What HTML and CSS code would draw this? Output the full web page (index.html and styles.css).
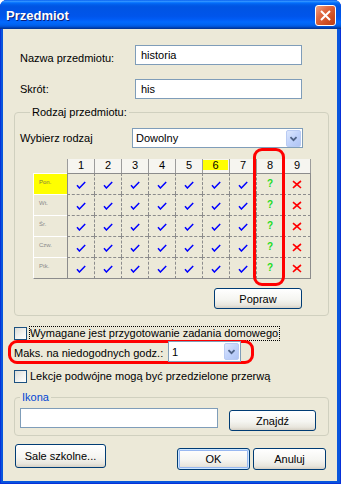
FILE: index.html
```html
<!DOCTYPE html>
<html lang="pl">
<head>
  <meta charset="UTF-8" />
  <title>Przedmiot</title>
  <link rel="stylesheet" href="styles.css">
</head>
<body>
  <svg class="defs" width="0" height="0">
    <symbol id="chk" viewBox="0 0 10 8"><path d="M1 4.2 L3.4 7 L9.2 1" fill="none" stroke="#0000ff" stroke-width="1.5"/></symbol>
    <symbol id="no" viewBox="0 0 10 9"><path d="M1 1.2 Q5 4.5 9 8 M9 1 Q4.5 4.5 1 8" fill="none" stroke="#ff0000" stroke-width="1.6"/></symbol>
    <symbol id="down" viewBox="0 0 15 17"><path d="M4 7 L7.5 10.5 L11 7" fill="none" stroke="#4d6185" stroke-width="2"/></symbol>
  </svg>

  <div class="window">
    <div class="titlebar">
      <span class="title">Przedmiot</span>
      <span class="close">
        <svg width="19" height="19" viewBox="0 0 19 19"><path d="M5 5 L14 14 M14 5 L5 14" stroke="#fff" stroke-width="2"/></svg>
      </span>
    </div>

    <div class="client">
      <div class="row first">
        <label class="lbl low">Nazwa przedmiotu:</label>
        <input class="textbox" type="text" value="historia">
      </div>
      <div class="row second">
        <label class="lbl">Skrót:</label>
        <input class="textbox" type="text" value="his">
      </div>

      <fieldset class="group">
        <legend>Rodzaj przedmiotu:</legend>
        <div class="row kind">
          <label class="lbl">Wybierz rodzaj</label>
          <div class="combo wide"><span>Dowolny</span><svg class="combo-btn"><use href="#down"/></svg></div>
        </div>

        <div class="plan">
          <div class="plan-head">
            <span class="corner"></span><span>1</span><span>2</span><span>3</span><span>4</span><span>5</span><span class="today"><i>6</i></span><span>7</span><span>8</span><span>9</span>
          </div>
          <div class="plan-row">
            <span class="day today">Pon.</span>
            <span class="c"><svg class="ok"><use href="#chk"/></svg></span><span class="c"><svg class="ok"><use href="#chk"/></svg></span><span class="c"><svg class="ok"><use href="#chk"/></svg></span><span class="c"><svg class="ok"><use href="#chk"/></svg></span><span class="c"><svg class="ok"><use href="#chk"/></svg></span><span class="c"><svg class="ok"><use href="#chk"/></svg></span><span class="c"><svg class="ok"><use href="#chk"/></svg></span><span class="c"><b class="maybe">?</b></span><span class="c"><svg class="no"><use href="#no"/></svg></span>
          </div>
          <div class="plan-row">
            <span class="day">Wt.</span>
            <span class="c"><svg class="ok"><use href="#chk"/></svg></span><span class="c"><svg class="ok"><use href="#chk"/></svg></span><span class="c"><svg class="ok"><use href="#chk"/></svg></span><span class="c"><svg class="ok"><use href="#chk"/></svg></span><span class="c"><svg class="ok"><use href="#chk"/></svg></span><span class="c"><svg class="ok"><use href="#chk"/></svg></span><span class="c"><svg class="ok"><use href="#chk"/></svg></span><span class="c"><b class="maybe">?</b></span><span class="c"><svg class="no"><use href="#no"/></svg></span>
          </div>
          <div class="plan-row">
            <span class="day">Śr.</span>
            <span class="c"><svg class="ok"><use href="#chk"/></svg></span><span class="c"><svg class="ok"><use href="#chk"/></svg></span><span class="c"><svg class="ok"><use href="#chk"/></svg></span><span class="c"><svg class="ok"><use href="#chk"/></svg></span><span class="c"><svg class="ok"><use href="#chk"/></svg></span><span class="c"><svg class="ok"><use href="#chk"/></svg></span><span class="c"><svg class="ok"><use href="#chk"/></svg></span><span class="c"><b class="maybe">?</b></span><span class="c"><svg class="no"><use href="#no"/></svg></span>
          </div>
          <div class="plan-row">
            <span class="day">Czw.</span>
            <span class="c"><svg class="ok"><use href="#chk"/></svg></span><span class="c"><svg class="ok"><use href="#chk"/></svg></span><span class="c"><svg class="ok"><use href="#chk"/></svg></span><span class="c"><svg class="ok"><use href="#chk"/></svg></span><span class="c"><svg class="ok"><use href="#chk"/></svg></span><span class="c"><svg class="ok"><use href="#chk"/></svg></span><span class="c"><svg class="ok"><use href="#chk"/></svg></span><span class="c"><b class="maybe">?</b></span><span class="c"><svg class="no"><use href="#no"/></svg></span>
          </div>
          <div class="plan-row">
            <span class="day">Ptk.</span>
            <span class="c"><svg class="ok"><use href="#chk"/></svg></span><span class="c"><svg class="ok"><use href="#chk"/></svg></span><span class="c"><svg class="ok"><use href="#chk"/></svg></span><span class="c"><svg class="ok"><use href="#chk"/></svg></span><span class="c"><svg class="ok"><use href="#chk"/></svg></span><span class="c"><svg class="ok"><use href="#chk"/></svg></span><span class="c"><svg class="ok"><use href="#chk"/></svg></span><span class="c"><b class="maybe">?</b></span><span class="c"><svg class="no"><use href="#no"/></svg></span>
          </div>
          <span class="mark col-mark"></span>
        </div>

        <div class="group-actions">
          <button class="btn popraw">Popraw</button>
        </div>
      </fieldset>

      <div class="check-row homework">
        <span class="box"></span>
        <span class="check-text focus">Wymagane jest przygotowanie zadania domowego</span>
      </div>

      <div class="maks">
        <label class="lbl maks-lbl">Maks. na niedogodnych godz.:</label>
        <div class="combo small"><span>1</span><svg class="combo-btn"><use href="#down"/></svg></div>
        <span class="mark maks-mark"></span>
      </div>

      <div class="check-row split">
        <span class="box"></span>
        <span class="check-text">Lekcje podwójne mogą być przedzielone przerwą</span>
      </div>

      <fieldset class="group icon-group">
        <legend>Ikona</legend>
        <div class="icon-row">
          <input class="textbox icon-path" type="text" value="">
          <button class="btn find">Znajdź</button>
        </div>
      </fieldset>

      <div class="footer">
        <button class="btn rooms">Sale szkolne...</button>
        <button class="btn ok-btn">OK</button>
        <button class="btn cancel">Anuluj</button>
      </div>
    </div>
  </div>
</body>
</html>
```

FILE: styles.css
```css
* {
  box-sizing: border-box;
}

html, body {
  margin: 0;
}

body {
  width: 341px;
  height: 484px;
  overflow: hidden;
  background: #fff;
  font-family: "Liberation Sans", Arial, sans-serif;
  font-size: 11px;
  color: #000;
}

.defs {
  position: absolute;
}

.window {
  width: 341px;
  height: 484px;
  display: flex;
  flex-direction: column;
  background: #0855dd;
  border-radius: 7px 7px 0 0;
  box-shadow: inset 1px 0 #0831d9, inset -1px 0 #0831d9, inset 0 -1px #0831d9;
}

/* title bar */
.titlebar {
  height: 29px;
  flex: none;
  display: flex;
  align-items: flex-start;
  border-radius: 7px 7px 0 0;
  background: linear-gradient(to bottom, #0058ee 0%, #3593ff 4%, #288eff 6%, #127dff 8%, #036ffc 10%, #0262ee 14%, #0057e5 20%, #0054e3 24%, #0055eb 56%, #005bf5 66%, #026afe 76%, #0062ef 86%, #0052d6 92%, #0040ab 96%, #003092 100%);
}

.title {
  margin: 8px 0 0 6px;
  font-size: 13px;
  font-weight: bold;
  color: #fff;
  text-shadow: 1px 1px #0a1e7a;
}

.close {
  margin: 5px 5px 0 auto;
  width: 21px;
  height: 21px;
  border: 1px solid #fff;
  border-radius: 3px;
  background: linear-gradient(135deg, #f0a285 0%, #e06a43 35%, #cc4a1e 75%, #b8401b 100%);
  display: flex;
}

.client {
  flex: 1;
  margin: 0 4px 3px 3px;
  padding: 0 8px 0 11px;
  background: #ece9d8;
}

/* label + field rows */
.row {
  display: flex;
  align-items: center;
  height: 20px;
  padding-left: 6px;
}

.row.first {
  margin-top: 16px;
}

.row.second {
  margin-top: 14px;
}

.lbl {
  width: 115px;
  flex: none;
  white-space: nowrap;
}

.lbl.low {
  padding-top: 6px;
}

.textbox {
  width: 167px;
  height: 20px;
  border: 1px solid #7f9db9;
  padding: 0 5px;
  font: inherit;
  background: #fff;
  outline: none;
}

.combo {
  position: relative;
  z-index: 1;
  display: flex;
  align-items: center;
  height: 20px;
  border: 1px solid #7f9db9;
  background: #fff;
  padding: 0 1px 0 3px;
}

.combo span {
  flex: 1;
}

.combo-btn {
  width: 15px;
  height: 17px;
  border-radius: 2px;
  border: 1px solid #b9cbf3;
  background: linear-gradient(135deg, #dde7fd 0%, #c1d3fb 50%, #b0c4f4 100%);
}

.combo.wide {
  width: 171px;
}

.combo.small {
  width: 73px;
  height: 21px;
}

/* group boxes */
.group {
  margin: 7px 0 0;
  padding: 0 0 6px;
  min-width: 0;
  border: 1px solid #d0d0bf;
  border-radius: 4px;
}

.group legend {
  margin-left: 15px;
  padding: 0 2px;
  line-height: 13px;
}

.row.kind {
  margin-top: 9px;
  padding-left: 5px;
}

.row.kind .lbl {
  width: 112px;
}

/* plan grid */
.plan {
  position: relative;
  margin: 11px 0 0 18px;
  width: 278px;
}

.plan-head,
.plan-row {
  display: flex;
}

.plan-head span {
  width: 27px;
  height: 14px;
  border-left: 1px solid #9c9c9c;
  background: #f6f5f0;
  text-align: center;
  line-height: 13px;
}

.plan-head span:last-child {
  width: 28px;
  border-right: 1px solid #9c9c9c;
}

.plan-head .corner {
  width: 34px;
  border: none;
  background: none;
}

.plan-head .today i {
  display: block;
  font-style: normal;
  margin: 1px 1px 3px 0;
  height: 10px;
  line-height: 10px;
  background: #ffff00;
}

.plan-row {
  height: 21px;
}

.plan-row:last-of-type {
  height: 22px;
}

.c {
  width: 27px;
  display: flex;
  align-items: center;
  justify-content: center;
  border-left: 1px dashed #8c8c8c;
  border-top: 1px dashed #8c8c8c;
}

.plan-row .c:nth-child(2) {
  border-left-style: solid;
}

.plan-row .c:last-child {
  width: 28px;
  border-right: 1px solid #8c8c8c;
}

.plan-head + .plan-row .c {
  border-top-style: solid;
}

.plan-row:last-of-type .c,
.plan-row:last-of-type .day {
  border-bottom: 1px solid #8c8c8c;
}

.day {
  width: 34px;
  border-top: 1px solid #fff;
  border-left: 1px solid #fff;
  padding: 5px 0 0 5px;
  font-size: 6px;
  line-height: 7px;
  color: #8a8a8a;
}

.day.today {
  background: #ffff00;
  color: #7a7a40;
}

.ok {
  width: 10px;
  height: 8px;
  margin: 1px 1px 0 0;
}

.no {
  width: 10px;
  height: 9px;
}

.maybe {
  font-size: 10px;
  line-height: 10px;
  color: #1edc1e;
}

.mark {
  position: absolute;
  border: 3px solid #ff0000;
  border-radius: 9px;
}

.col-mark {
  left: 220px;
  top: -11px;
  width: 32px;
  height: 138px;
}

.group-actions {
  display: flex;
  justify-content: flex-end;
  margin: 9px 26px 0 0;
}

/* buttons */
.btn {
  height: 21px;
  padding: 0;
  font: inherit;
  color: #000;
  border: 1px solid #003c74;
  border-radius: 3px;
  background: linear-gradient(to bottom, #fff 0%, #f5f5f1 55%, #e8e6dd 85%, #d6d0c5 100%);
}

.popraw {
  width: 88px;
}

/* check boxes */
.check-row {
  display: flex;
  align-items: center;
  height: 15px;
}

.check-row.homework {
  margin-top: 10px;
}

.check-row.split {
  margin-top: 7px;
}

.box {
  width: 13px;
  height: 13px;
  flex: none;
  border: 1px solid #1c5180;
  background: linear-gradient(135deg, #dcdcd7 0%, #f4f4f1 60%, #fff 100%);
}

.check-text {
  margin-left: 2px;
  padding: 0 1px 0 0;
  border: 1px solid transparent;
  line-height: 13px;
  white-space: nowrap;
}

.check-text.focus {
  border: 1px dotted #000;
}

/* maks row */
.maks {
  position: relative;
  display: flex;
  align-items: center;
  height: 21px;
}

.maks-lbl {
  width: 154px;
  padding-top: 2px;
}

.maks-mark {
  left: -6px;
  top: -1px;
  width: 246px;
  height: 24px;
}

/* icon group */
.icon-group {
  margin-top: 7px;
  padding-bottom: 4px;
}

.icon-group legend {
  margin-left: 5px;
  color: #0046d5;
}

.icon-row {
  display: flex;
  align-items: flex-start;
  margin: 4px 0 0 5px;
}

.icon-path {
  width: 198px;
}

.find {
  width: 87px;
  margin: 2px 0 0 11px;
}

/* bottom buttons */
.footer {
  display: flex;
  align-items: flex-start;
  margin-top: 8px;
  padding-left: 1px;
}

.rooms {
  width: 91px;
  height: 24px;
}

.ok-btn {
  width: 73px;
  height: 22px;
  margin: 4px 0 0 auto;
  box-shadow: inset 0 0 0 1px #cee7ff, inset 0 0 0 2px #98b8f1;
}

.cancel {
  width: 73px;
  height: 22px;
  margin: 4px 3px 0 3px;
}
```
